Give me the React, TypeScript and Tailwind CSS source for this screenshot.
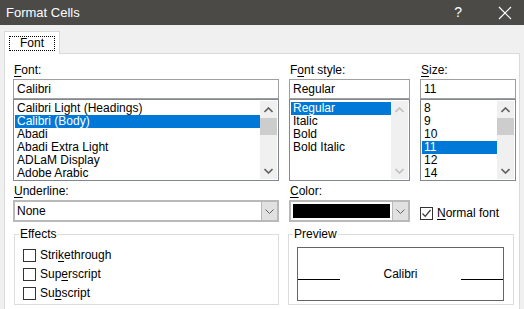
import React from "react";

const fontStack = { fontFamily: '"Liberation Sans", Arial, sans-serif' };

const Chevron = ({ dir, light }: { dir: "up" | "down"; light?: boolean }) => (
  <svg width="9" height="6" viewBox="0 0 9 6" className="block">
    <path
      d={dir === "up" ? "M0.5 5 L4.5 1 L8.5 5" : "M0.5 1 L4.5 5 L8.5 1"}
      fill="none"
      stroke={light ? "#c0c0c0" : "#606060"}
      strokeWidth="1.6"
    />
  </svg>
);

const Scrollbar = ({ thumb }: { thumb: boolean }) => (
  <div className="w-[17px] h-full bg-[#f0f0f0] flex flex-col items-center shrink-0">
    <div className="h-[17px] w-full flex items-center justify-center">
      <Chevron dir="up" light={!thumb} />
    </div>
    {thumb && <div className="w-full h-[17px] bg-[#cdcdcd]" />}
    <div className="flex-1" />
    <div className="h-[17px] w-full flex items-center justify-center">
      <Chevron dir="down" light={!thumb} />
    </div>
  </div>
);

const Label = ({ pre, u, post }: { pre?: string; u: string; post: string }) => (
  <div className="h-[17px] pl-px pt-px leading-[15px] text-[12px] text-black">
    {pre}
    <span className="underline underline-offset-2">{u}</span>
    {post}
  </div>
);

const TextInput = ({ value }: { value: string }) => (
  <div className="h-[20px] border border-[#a0a0a0] bg-white pl-[3px] text-[12px] leading-[18px]">
    {value}
  </div>
);

const ListBox = ({
  items,
  selected,
  thumb,
}: {
  items: string[];
  selected: number;
  thumb: boolean;
}) => (
  <div className="h-[82px] border border-[#828790] bg-white flex p-px">
    <div className="flex-1 pt-px overflow-hidden">
      {items.map((it, i) => (
        <div
          key={it}
          className={`h-[13px] leading-[13px] pl-[2px] text-[12px] whitespace-nowrap ${
            i === selected ? "bg-[#0078d7] text-white" : "text-black"
          }`}
        >
          {it}
        </div>
      ))}
    </div>
    <Scrollbar thumb={thumb} />
  </div>
);

const DropButton = () => (
  <div className="w-[16px] h-full bg-[#e1e1e1] border-l border-[#b9b9b9] flex items-center justify-center">
    <svg width="9" height="5" viewBox="0 0 9 5">
      <path d="M0.5 0.5 L4.5 4.5 L8.5 0.5" fill="none" stroke="#606060" strokeWidth="1" />
    </svg>
  </div>
);

const CheckBox = ({ checked }: { checked?: boolean }) => (
  <div className="w-[13px] h-[13px] border border-[#333333] bg-white flex items-center justify-center shrink-0">
    {checked && (
      <svg width="11" height="11" viewBox="0 0 11 11">
        <path d="M1.5 5.5 L4.2 8.3 L9.5 2" fill="none" stroke="#333333" strokeWidth="1.2" />
      </svg>
    )}
  </div>
);

const GroupBox = ({ title, children, className }: { title: string; children: React.ReactNode; className: string }) => (
  <div className={`relative border border-[#dcdcdc] h-[71px] ${className}`}>
    <span className="absolute -top-[8px] left-[4px] bg-white px-px text-[12px] leading-[14px]">{title}</span>
    {children}
  </div>
);

export default function App() {
  return (
    <div style={fontStack} className="w-[524px] h-[309px] bg-[#f0f0f0] overflow-hidden text-black">
      {/* title bar */}
      <div className="h-[25px] bg-[#4b4a47] flex items-center text-white">
        <span className="pl-[6px] text-[13px] flex-1">Format Cells</span>
        <span className="text-[14px] mr-[36px]">?</span>
        <svg width="14" height="14" viewBox="0 0 14 14" className="mr-[12px]">
          <path d="M1 1 L13 13 M13 1 L1 13" stroke="#ffffff" strokeWidth="1.2" />
        </svg>
      </div>

      <div className="pt-[6px] pl-[4px] pr-[4px]">
        {/* tab strip */}
        <div className="flex">
          <div className="w-[56px] h-[23px] bg-white border border-b-0 border-[#d9d9d9] -mb-px relative z-10 pt-[4px] pl-[4px]">
            <div className="w-[46px] h-[15px] border border-dotted border-black text-[12px] leading-[13px] text-center">
              Font
            </div>
          </div>
        </div>

        {/* tab panel */}
        <div className="bg-white border border-[#d9d9d9] h-[260px] pl-[8px] pt-[8px]">
          <div className="flex gap-[10px]">
            <div className="w-[266px]">
              <Label u="F" post="ont:" />
              <TextInput value="Calibri" />
              <ListBox
                items={[
                  "Calibri Light (Headings)",
                  "Calibri (Body)",
                  "Abadi",
                  "Abadi Extra Light",
                  "ADLaM Display",
                  "Adobe Arabic",
                ]}
                selected={1}
                thumb
              />
            </div>
            <div className="w-[121px]">
              <Label pre="F" u="o" post="nt style:" />
              <TextInput value="Regular" />
              <ListBox items={["Regular", "Italic", "Bold", "Bold Italic"]} selected={0} thumb={false} />
            </div>
            <div className="w-[96px]">
              <Label u="S" post="ize:" />
              <TextInput value="11" />
              <ListBox items={["8", "9", "10", "11", "12", "14"]} selected={3} thumb />
            </div>
          </div>

          <div className="flex gap-[10px] mt-[2px]">
            <div className="w-[266px]">
              <Label u="U" post="nderline:" />
              <div className="h-[22px] border-2 border-[#b9b9b9] bg-white flex">
                <span className="flex-1 pl-[2px] text-[12px] leading-[18px]">None</span>
                <DropButton />
              </div>
            </div>
            <div className="w-[121px]">
              <Label u="C" post="olor:" />
              <div className="h-[22px] border-2 border-[#b9b9b9] bg-white flex">
                <div className="flex-1 p-[2px]">
                  <div className="h-full bg-black" />
                </div>
                <DropButton />
              </div>
            </div>
            <div className="w-[96px] pt-[21px] flex items-center gap-[4px]">
              <CheckBox checked />
              <span className="text-[12px] leading-[14px]">
                <span className="underline underline-offset-2">N</span>ormal font
              </span>
            </div>
          </div>

          <div className="flex gap-[10px] mt-[12px]">
            <GroupBox title="Effects" className="w-[265px] ml-px">
              <div className="flex flex-col gap-[6px] pl-[8px] pt-[14px]">
                <div className="flex items-center gap-[4px]">
                  <CheckBox />
                  <span className="text-[12px] leading-[13px]">
                    Stri<span className="underline underline-offset-2">k</span>ethrough
                  </span>
                </div>
                <div className="flex items-center gap-[4px]">
                  <CheckBox />
                  <span className="text-[12px] leading-[13px]">
                    Sup<span className="underline underline-offset-2">e</span>rscript
                  </span>
                </div>
                <div className="flex items-center gap-[4px]">
                  <CheckBox />
                  <span className="text-[12px] leading-[13px]">
                    Su<span className="underline underline-offset-2">b</span>script
                  </span>
                </div>
              </div>
            </GroupBox>
            <GroupBox title="Preview" className="w-[226px] -ml-px">
              <div className="ml-[8px] mt-[12px] w-[207px] h-[54px] border border-[#646464] flex items-center">
                <div className="w-[42px] h-px bg-black mt-[10px]" />
                <span className="flex-1 text-center text-[12px]">Calibri</span>
                <div className="w-[42px] h-px bg-black mt-[10px]" />
              </div>
            </GroupBox>
          </div>
        </div>
      </div>
    </div>
  );
}
